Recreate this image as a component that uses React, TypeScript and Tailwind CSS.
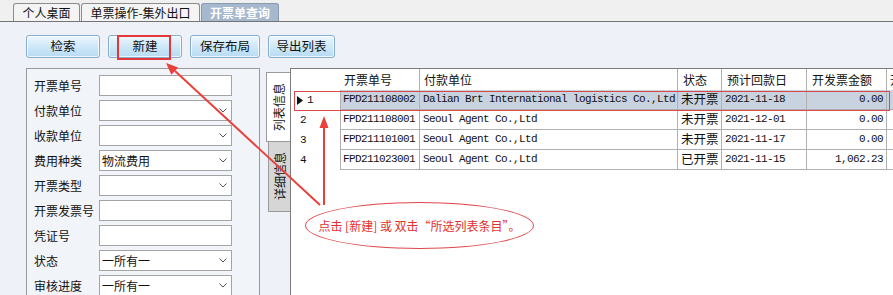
import type { ReactNode } from "react";

const cjk = "font-['Noto_Sans_CJK_SC','Noto_Sans',sans-serif]";
const mono = "font-['Liberation_Mono','Noto_Sans_CJK_SC',monospace]";

type Field = { label: string; select?: boolean; value?: string };

const fields: Field[] = [
  { label: "开票单号" },
  { label: "付款单位", select: true },
  { label: "收款单位", select: true },
  { label: "费用种类", select: true, value: "物流费用" },
  { label: "开票类型", select: true },
  { label: "开票发票号" },
  { label: "凭证号" },
  { label: "状态", select: true, value: "一所有一" },
  { label: "审核进度", select: true, value: "一所有一" },
];

type Row = { no: string; payer: string; status: string; date: string; amount: string };

const rows: Row[] = [
  { no: "FPD211108002", payer: "Dalian Brt International logistics Co.,Ltd", status: "未开票", date: "2021-11-18", amount: "0.00" },
  { no: "FPD211108001", payer: "Seoul Agent Co.,Ltd", status: "未开票", date: "2021-12-01", amount: "0.00" },
  { no: "FPD211101001", payer: "Seoul Agent Co.,Ltd", status: "未开票", date: "2021-11-17", amount: "0.00" },
  { no: "FPD211023001", payer: "Seoul Agent Co.,Ltd", status: "已开票", date: "2021-11-15", amount: "1,062.23" },
];

function Tab({ label, width, active = false }: { label: string; width: string; active?: boolean }) {
  return (
    <div
      className={`${width} flex h-[18px] items-center justify-center rounded-t-[3px] border border-b-0 text-[12px] leading-none ${
        active
          ? "border-[#8a9bb0] bg-[#a6b8cd] font-bold text-white"
          : "border-[#8c8c8c] bg-[#f4f4f4] text-[#111]"
      }`}
    >
      {label}
    </div>
  );
}

function ToolButton({ label, width }: { label: string; width: string }) {
  return (
    <button
      className={`${width} h-[23px] rounded-[3px] border border-[#86acd0] bg-linear-to-b from-[#eef7fd] via-[#cfe8f8] to-[#b7dbf3] text-[12.5px] leading-none text-[#111] shadow-[inset_0_0_0_1px_rgba(255,255,255,0.75)]`}
    >
      {label}
    </button>
  );
}

function Chevron() {
  return (
    <svg width="8" height="5" viewBox="0 0 8 5" className="mr-[4px]">
      <polyline points="0.5,0.5 4,4 7.5,0.5" fill="none" stroke="#555" strokeWidth="1" />
    </svg>
  );
}

function FieldRow({ field }: { field: Field }) {
  return (
    <div className="mb-[4px] flex h-[21px] items-center">
      <div className="w-[72px] pl-[7px] text-[12px] leading-none text-[#111]">{field.label}</div>
      <div className="flex h-[21px] w-[133px] items-center justify-between border border-[#a4a4a4] bg-white">
        <span className="pl-[2px] text-[12px] leading-none text-[#111]">{field.value ?? ""}</span>
        {field.select ? <Chevron /> : null}
      </div>
    </div>
  );
}

function Cell({
  children,
  width,
  className = "",
}: {
  children?: ReactNode;
  width: string;
  className?: string;
}) {
  return (
    <div className={`${width} flex shrink-0 items-center overflow-hidden whitespace-nowrap border-r border-[#b0b0b0] ${className}`}>
      {children}
    </div>
  );
}

function SideLabel({ children }: { children: ReactNode }) {
  return (
    <span className="rotate-180 text-[12px] leading-none text-[#111] [text-orientation:sideways] [writing-mode:vertical-rl]">
      {children}
    </span>
  );
}

export default function App() {
  return (
    <div className={`relative h-[295px] w-[893px] overflow-hidden bg-[#eef2f8] ${cjk}`}>
      {/* tab bar */}
      <div className="flex h-[22px] items-end gap-px border-b border-[#747474] bg-[#f0f0f0] pl-[13px]">
        <Tab label="个人桌面" width="w-[67px]" />
        <Tab label="单票操作-集外出口" width="w-[119px]" />
        <Tab label="开票单查询" width="w-[78px]" active />
      </div>

      {/* toolbar */}
      <div className="flex h-[46px] gap-[8px] pl-[26px] pt-[13px]">
        <ToolButton label="检索" width="w-[74px]" />
        <ToolButton label="新建" width="w-[74px]" />
        <ToolButton label="保存布局" width="w-[70px]" />
        <ToolButton label="导出列表" width="w-[67px]" />
      </div>

      {/* content */}
      <div className="flex h-[227px]">
        <div className="ml-[26px] h-[240px] w-[234px] shrink-0 border border-[#9a9a9a] bg-[#f1f4f9] pt-[6px]">
          {fields.map((field) => (
            <FieldRow key={field.label} field={field} />
          ))}
        </div>

        <div className="w-[30px] shrink-0 pt-[4px]">
          <div className="ml-[6px] flex h-[70px] w-[24px] items-center justify-center border border-r-0 border-[#9a9a9a] bg-white">
            <SideLabel>列表信息</SideLabel>
          </div>
          <div className="ml-[8px] flex h-[70px] w-[22px] items-center justify-center border border-t-0 border-r-0 border-[#9a9a9a] bg-[#d6d6d6]">
            <SideLabel>详细信息</SideLabel>
          </div>
        </div>

        <div className="flex-1 border-l border-t border-[#7c7c7c] bg-white">
          <div className="flex h-[21px] text-[12px] leading-none text-[#111]">
            <div className="w-[49px] shrink-0" />
            <Cell width="w-[80px]" className="pl-[4px]">开票单号</Cell>
            <Cell width="w-[258px]" className="pl-[4px]">付款单位</Cell>
            <Cell width="w-[44px]" className="pl-[5px]">状态</Cell>
            <Cell width="w-[85px]" className="pl-[5px]">预计回款日</Cell>
            <Cell width="w-[80px]" className="pl-[5px]">开发票金额</Cell>
            <Cell width="w-[60px]" className="pl-[3px]">开票日期</Cell>
          </div>
          {rows.map((row, i) => {
            const selected = i === 0;
            const bg = selected ? "bg-[#c9d3df]" : "";
            return (
              <div key={row.no} className={`flex h-[20px] text-[11px] leading-none tracking-[-0.6px] text-[#111] ${mono}`}>
                <div className="flex w-[49px] shrink-0 items-center pl-[6px]">
                  {selected ? (
                    <>
                      <svg width="6" height="9" viewBox="0 0 6 9" className="mr-[4px]">
                        <polygon points="0,0 6,4.5 0,9" fill="#111" />
                      </svg>
                      <span>1</span>
                    </>
                  ) : (
                    <span className="pl-[3px]">{i + 1}</span>
                  )}
                </div>
                <div className={`flex border-b border-l border-[#b0b0b0] ${bg}`}>
                  <Cell width="w-[79px]" className="pl-[2px]">{row.no}</Cell>
                  <Cell width="w-[258px]" className="pl-[3px]">{row.payer}</Cell>
                  <Cell width="w-[44px]" className={`pl-[3px] text-[12.5px] tracking-normal ${cjk}`}>{row.status}</Cell>
                  <Cell width="w-[85px]" className="pl-[3px]">{row.date}</Cell>
                  <Cell width="w-[80px]" className="justify-end pr-[3px]">{row.amount}</Cell>
                  <Cell width="w-[60px]" />
                </div>
              </div>
            );
          })}
        </div>
      </div>

      {/* annotation overlay */}
      <div className="pointer-events-none absolute left-[117px] top-[35px] h-[25px] w-[54px] border-2 border-[#e3373a]" />
      <div className="pointer-events-none absolute left-[294px] top-[91px] h-[20px] w-[596px] border border-[#d9484b]" />
      <svg className="pointer-events-none absolute left-0 top-0" width="893" height="295" viewBox="0 0 893 295">
        <line x1="324" y1="205" x2="324" y2="126" stroke="#e8413c" strokeWidth="2" />
        <polygon points="324,116 319.5,128 328.5,128" fill="#e8413c" />
        <line x1="320" y1="205" x2="175" y2="71" stroke="#e8413c" strokeWidth="2" />
        <polygon points="166,63 178.2,67.4 171.4,74.8" fill="#e8413c" />
      </svg>
      <div className="pointer-events-none absolute left-[305px] top-[202px] flex h-[47px] w-[229px] items-center justify-center rounded-[50%] border border-[#e0474a] bg-white">
        <span className="text-[12px] leading-none text-[#e2302f]">点击 [新建] 或 双击“所选列表条目”。</span>
      </div>
    </div>
  );
}
